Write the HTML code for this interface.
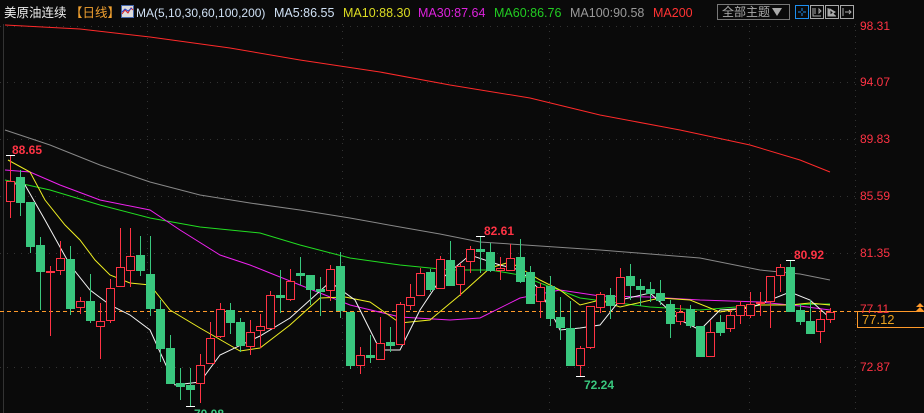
<!DOCTYPE html>
<html><head><meta charset="utf-8"><style>
html,body{margin:0;padding:0;background:#0a0a0a;width:924px;height:413px;overflow:hidden;font-family:"Liberation Sans","Noto Sans CJK SC",sans-serif}
.t{position:absolute;top:5px;font-size:12.5px;line-height:16px;white-space:nowrap}
.p{position:absolute;font-size:12px;color:#ff3344;left:860px}
</style></head><body>
<svg width="924" height="413" style="position:absolute;left:0;top:0">
<rect width="924" height="413" fill="#0a0a0a"/>
<line x1="855.5" y1="24" x2="855.5" y2="413" stroke="#333" stroke-dasharray="1,5"/>
<g stroke="#333" stroke-dasharray="1,6">
<line x1="0" y1="26.5" x2="855" y2="26.5"/><line x1="0" y1="82.5" x2="855" y2="82.5"/><line x1="0" y1="139.5" x2="855" y2="139.5"/><line x1="0" y1="196.5" x2="855" y2="196.5"/><line x1="0" y1="253.5" x2="855" y2="253.5"/><line x1="0" y1="367.5" x2="855" y2="367.5"/>
<line x1="147.5" y1="24" x2="147.5" y2="413"/><line x1="342.5" y1="24" x2="342.5" y2="413"/><line x1="549.5" y1="24" x2="549.5" y2="413"/><line x1="749.5" y1="24" x2="749.5" y2="413"/>
</g>
<line x1="3.5" y1="24" x2="3.5" y2="413" stroke="#333"/>
<line x1="0" y1="311.5" x2="858" y2="311.5" stroke="#ff9a2a" stroke-dasharray="4,3"/>
<g fill="none" stroke-width="1">
<polyline stroke="#ff2a2a" points="5,25 80,29 150,37 230,48 300,60 380,72 450,85 530,98 600,115 680,130 750,145 800,160 830,172"/>
<polyline stroke="#888" points="5,130 50,145 100,165 150,182 200,195 250,203 300,210 350,218 400,227 440,234 480,242 540,246 600,250 650,254 700,258 760,270 800,274 830,280"/>
<polyline stroke="#22dd22" points="5,180 50,190 100,205 150,218 200,227 260,233 300,245 350,258 400,265 450,270 490,270 520,275 540,283 580,298 650,307 700,310 760,305 830,304"/>
<polyline stroke="#ee22ee" points="5,170 30,172 60,185 100,200 150,210 180,230 220,255 250,265 300,285 350,305 400,317 450,320 480,318 520,298 560,290 600,296 650,297 700,300 760,302 800,306 830,310"/>
<polyline stroke="#eeee22" points="8,160 30,172 45,200 65,225 80,240 95,260 110,275 130,283 150,285 170,310 200,328 240,351 260,348 290,325 320,298 345,297 370,302 400,323 430,320 460,295 490,268 510,262 540,280 560,290 580,305 600,300 620,307 660,298 690,300 720,312 760,305 790,305 810,303 830,305"/>
<polyline stroke="#f4f4f4" points="8,183 25,185 45,220 70,265 90,290 110,305 130,315 150,330 175,385 200,382 220,355 260,336 290,318 330,282 355,300 380,350 400,350 420,310 440,280 470,255 500,265 520,270 540,290 560,330 580,328 600,325 620,300 650,293 680,320 700,330 720,310 750,308 790,292 810,300 830,318"/>
</g>
<g stroke="#ff3344" fill="#0a0a0a">
<line x1="10.5" y1="155" x2="10.5" y2="218"/><rect x="6.5" y="181.5" width="8" height="20"/>
<line x1="50.5" y1="266" x2="50.5" y2="336"/><rect x="46.5" y="271.5" width="8" height="1"/>
<line x1="60.5" y1="241" x2="60.5" y2="275"/><rect x="56.5" y="258.5" width="8" height="12"/>
<line x1="80.5" y1="297" x2="80.5" y2="314"/><rect x="76.5" y="301.5" width="8" height="6"/>
<line x1="100.5" y1="303" x2="100.5" y2="359"/><rect x="96.5" y="321.5" width="8" height="5"/>
<line x1="110.5" y1="279" x2="110.5" y2="323"/><rect x="106.5" y="288.5" width="8" height="32"/>
<line x1="120.5" y1="228" x2="120.5" y2="286"/><rect x="116.5" y="267.5" width="8" height="19"/>
<line x1="130.5" y1="228" x2="130.5" y2="287"/><rect x="126.5" y="256.5" width="8" height="14"/>
<line x1="200.5" y1="354" x2="200.5" y2="403"/><rect x="196.5" y="365.5" width="8" height="18"/>
<line x1="210.5" y1="322" x2="210.5" y2="363"/><rect x="206.5" y="338.5" width="8" height="25"/>
<line x1="220.5" y1="303" x2="220.5" y2="338"/><rect x="216.5" y="309.5" width="8" height="27"/>
<line x1="250.5" y1="320" x2="250.5" y2="355"/><rect x="246.5" y="332.5" width="8" height="14"/>
<line x1="260.5" y1="314" x2="260.5" y2="348"/><rect x="256.5" y="326.5" width="8" height="4"/>
<line x1="270.5" y1="291" x2="270.5" y2="329"/><rect x="266.5" y="295.5" width="8" height="33"/>
<line x1="290.5" y1="269" x2="290.5" y2="301"/><rect x="286.5" y="281.5" width="8" height="18"/>
<line x1="330.5" y1="265" x2="330.5" y2="301"/><rect x="326.5" y="269.5" width="8" height="21"/>
<line x1="360.5" y1="347" x2="360.5" y2="374"/><rect x="356.5" y="355.5" width="8" height="10"/>
<line x1="380.5" y1="317" x2="380.5" y2="359"/><rect x="376.5" y="343.5" width="8" height="16"/>
<line x1="400.5" y1="302" x2="400.5" y2="344"/><rect x="396.5" y="304.5" width="8" height="40"/>
<line x1="410.5" y1="284" x2="410.5" y2="310"/><rect x="406.5" y="297.5" width="8" height="8"/>
<line x1="420.5" y1="268" x2="420.5" y2="296"/><rect x="416.5" y="273.5" width="8" height="22"/>
<line x1="440.5" y1="256" x2="440.5" y2="289"/><rect x="436.5" y="259.5" width="8" height="29"/>
<line x1="460.5" y1="263" x2="460.5" y2="296"/><rect x="456.5" y="266.5" width="8" height="18"/>
<line x1="470.5" y1="246" x2="470.5" y2="273"/><rect x="466.5" y="249.5" width="8" height="12"/>
<line x1="500.5" y1="257" x2="500.5" y2="280"/><rect x="496.5" y="268.5" width="8" height="2"/>
<line x1="510.5" y1="244" x2="510.5" y2="270"/><rect x="506.5" y="258.5" width="8" height="12"/>
<line x1="540.5" y1="283" x2="540.5" y2="318"/><rect x="536.5" y="287.5" width="8" height="14"/>
<line x1="580.5" y1="346" x2="580.5" y2="376"/><rect x="576.5" y="348.5" width="8" height="17"/>
<line x1="590.5" y1="306" x2="590.5" y2="349"/><rect x="586.5" y="306.5" width="8" height="41"/>
<line x1="600.5" y1="292" x2="600.5" y2="313"/><rect x="596.5" y="294.5" width="8" height="13"/>
<line x1="620.5" y1="268" x2="620.5" y2="304"/><rect x="616.5" y="277.5" width="8" height="26"/>
<line x1="680.5" y1="305" x2="680.5" y2="325"/><rect x="676.5" y="312.5" width="8" height="9"/>
<line x1="710.5" y1="320" x2="710.5" y2="356"/><rect x="706.5" y="332.5" width="8" height="24"/>
<line x1="730.5" y1="310" x2="730.5" y2="332"/><rect x="726.5" y="315.5" width="8" height="13"/>
<line x1="740.5" y1="301" x2="740.5" y2="324"/><rect x="736.5" y="305.5" width="8" height="10"/>
<line x1="750.5" y1="292" x2="750.5" y2="318"/><rect x="746.5" y="304.5" width="8" height="11"/>
<line x1="760.5" y1="292" x2="760.5" y2="316"/><rect x="756.5" y="302.5" width="8" height="1"/>
<line x1="770.5" y1="276" x2="770.5" y2="328"/><rect x="766.5" y="276.5" width="8" height="25"/>
<line x1="780.5" y1="264" x2="780.5" y2="292"/><rect x="776.5" y="267.5" width="8" height="8"/>
<line x1="820.5" y1="309" x2="820.5" y2="343"/><rect x="816.5" y="319.5" width="8" height="12"/>
<line x1="830.5" y1="308" x2="830.5" y2="323"/><rect x="826.5" y="312.5" width="8" height="7"/>
</g>
<g stroke="#39c77e" fill="#39c77e">
<line x1="20.5" y1="170" x2="20.5" y2="216"/><rect x="16.5" y="177.5" width="8" height="25"/>
<line x1="30.5" y1="202" x2="30.5" y2="253"/><rect x="26.5" y="202.5" width="8" height="44"/>
<line x1="40.5" y1="237" x2="40.5" y2="310"/><rect x="36.5" y="245.5" width="8" height="26"/>
<line x1="70.5" y1="246" x2="70.5" y2="315"/><rect x="66.5" y="259.5" width="8" height="49"/>
<line x1="90.5" y1="274" x2="90.5" y2="323"/><rect x="86.5" y="301.5" width="8" height="19"/>
<line x1="140.5" y1="236" x2="140.5" y2="276"/><rect x="136.5" y="255.5" width="8" height="15"/>
<line x1="150.5" y1="236" x2="150.5" y2="316"/><rect x="146.5" y="274.5" width="8" height="34"/>
<line x1="160.5" y1="300" x2="160.5" y2="362"/><rect x="156.5" y="309.5" width="8" height="39"/>
<line x1="170.5" y1="335" x2="170.5" y2="383"/><rect x="166.5" y="348.5" width="8" height="35"/>
<line x1="180.5" y1="368" x2="180.5" y2="400"/><rect x="176.5" y="383.5" width="8" height="3"/>
<line x1="190.5" y1="368" x2="190.5" y2="406"/><rect x="186.5" y="385.5" width="8" height="4"/>
<line x1="230.5" y1="303" x2="230.5" y2="334"/><rect x="226.5" y="310.5" width="8" height="12"/>
<line x1="240.5" y1="318" x2="240.5" y2="352"/><rect x="236.5" y="322.5" width="8" height="23"/>
<line x1="280.5" y1="270" x2="280.5" y2="313"/><rect x="276.5" y="295.5" width="8" height="2"/>
<line x1="300.5" y1="257" x2="300.5" y2="285"/><rect x="296.5" y="273.5" width="8" height="2"/>
<line x1="310.5" y1="275" x2="310.5" y2="305"/><rect x="306.5" y="275.5" width="8" height="14"/>
<line x1="320.5" y1="277" x2="320.5" y2="316"/><rect x="316.5" y="289.5" width="8" height="2"/>
<line x1="340.5" y1="252" x2="340.5" y2="318"/><rect x="336.5" y="266.5" width="8" height="44"/>
<line x1="350.5" y1="312" x2="350.5" y2="369"/><rect x="346.5" y="312.5" width="8" height="53"/>
<line x1="370.5" y1="335" x2="370.5" y2="363"/><rect x="366.5" y="355.5" width="8" height="2"/>
<line x1="390.5" y1="327" x2="390.5" y2="352"/><rect x="386.5" y="342.5" width="8" height="3"/>
<line x1="430.5" y1="269" x2="430.5" y2="292"/><rect x="426.5" y="272.5" width="8" height="17"/>
<line x1="450.5" y1="241" x2="450.5" y2="286"/><rect x="446.5" y="260.5" width="8" height="25"/>
<line x1="480.5" y1="236" x2="480.5" y2="273"/><rect x="476.5" y="249.5" width="8" height="2"/>
<line x1="490.5" y1="243" x2="490.5" y2="272"/><rect x="486.5" y="252.5" width="8" height="18"/>
<line x1="520.5" y1="239" x2="520.5" y2="283"/><rect x="516.5" y="257.5" width="8" height="24"/>
<line x1="530.5" y1="266" x2="530.5" y2="304"/><rect x="526.5" y="272.5" width="8" height="31"/>
<line x1="550.5" y1="276" x2="550.5" y2="326"/><rect x="546.5" y="286.5" width="8" height="32"/>
<line x1="560.5" y1="297" x2="560.5" y2="340"/><rect x="556.5" y="317.5" width="8" height="10"/>
<line x1="570.5" y1="301" x2="570.5" y2="365"/><rect x="566.5" y="328.5" width="8" height="37"/>
<line x1="610.5" y1="288" x2="610.5" y2="319"/><rect x="606.5" y="295.5" width="8" height="10"/>
<line x1="630.5" y1="264" x2="630.5" y2="300"/><rect x="626.5" y="276.5" width="8" height="9"/>
<line x1="640.5" y1="279" x2="640.5" y2="306"/><rect x="636.5" y="286.5" width="8" height="3"/>
<line x1="650.5" y1="282" x2="650.5" y2="302"/><rect x="646.5" y="289.5" width="8" height="4"/>
<line x1="660.5" y1="280" x2="660.5" y2="305"/><rect x="656.5" y="293.5" width="8" height="7"/>
<line x1="670.5" y1="300" x2="670.5" y2="338"/><rect x="666.5" y="304.5" width="8" height="19"/>
<line x1="690.5" y1="305" x2="690.5" y2="328"/><rect x="686.5" y="309.5" width="8" height="16"/>
<line x1="700.5" y1="326" x2="700.5" y2="356"/><rect x="696.5" y="326.5" width="8" height="30"/>
<line x1="720.5" y1="315" x2="720.5" y2="336"/><rect x="716.5" y="322.5" width="8" height="10"/>
<line x1="790.5" y1="261" x2="790.5" y2="311"/><rect x="786.5" y="267.5" width="8" height="44"/>
<line x1="800.5" y1="304" x2="800.5" y2="325"/><rect x="796.5" y="310.5" width="8" height="11"/>
<line x1="810.5" y1="300" x2="810.5" y2="334"/><rect x="806.5" y="321.5" width="8" height="12"/>
</g>
<g stroke="#fff"><line x1="6" y1="155.5" x2="15" y2="155.5"/><line x1="476" y1="236.5" x2="485" y2="236.5"/><line x1="786" y1="260.5" x2="795" y2="260.5"/><line x1="576" y1="376.5" x2="585" y2="376.5"/><line x1="186" y1="406.5" x2="195" y2="406.5"/></g>
<text x="12" y="154" fill="#ff3344" font-size="12" font-weight="bold" font-family="Liberation Sans">88.65</text>
<text x="484" y="235" fill="#ff3344" font-size="12" font-weight="bold" font-family="Liberation Sans">82.61</text>
<text x="794" y="259" fill="#ff3344" font-size="12" font-weight="bold" font-family="Liberation Sans">80.92</text>
<text x="584" y="389" fill="#39c77e" font-size="12" font-weight="bold" font-family="Liberation Sans">72.24</text>
<text x="194" y="418" fill="#39c77e" font-size="12" font-weight="bold" font-family="Liberation Sans">70.08</text>
<rect x="857.5" y="311.5" width="70" height="16" fill="#0a0a0a" stroke="#ff9a2a"/>
<text x="862" y="324" fill="#e8a020" font-size="13" font-family="Liberation Sans">77.12</text>
<path d="M916 307 l4 -4 l4 4z M916 311 l4 -4 l4 4z" fill="#ff9a2a"/>
<rect x="717.5" y="4.5" width="72" height="15" fill="none" stroke="#777"/>
<text x="722" y="16" fill="#aaa" font-size="12" font-family="Liberation Sans,Noto Sans CJK SC,sans-serif">全部主题</text>
<path d="M772 8 h10 l-5 8z" fill="#aaa"/>
<rect x="795.5" y="5.5" width="13" height="13" fill="none" stroke="#1e8ff0"/>
<path d="M802 8 v3 M802 13 v3 M798 12 h3 M803 12 h3" stroke="#1e8ff0"/>
<rect x="810.5" y="5.5" width="13" height="13" fill="none" stroke="#aaa"/>
<path d="M813 8 v8 h8 M815 8 v6 M819 9 v4 l2 -2z" stroke="#aaa" fill="none"/>
<rect x="825.5" y="5.5" width="13" height="13" fill="none" stroke="#aaa"/>
<path d="M828 8 v8 h8 M830 9 l5 3 -5 3z" stroke="#aaa" fill="#aaa"/>
<rect x="840.5" y="5.5" width="13" height="13" fill="none" stroke="#aaa"/>
<path d="M843 8 v8 M845 12 h6 M849 10 l2 2 -2 2" stroke="#aaa" fill="none"/>
<rect x="121.5" y="5.5" width="12" height="12" fill="#ddd" stroke="#4466aa"/>
<path d="M122 14 l3 -4 3 3 3 -5 2 2" stroke="#dd2222" fill="none"/>
<path d="M122 12 l3 -3 3 2 4 -3" stroke="#2244cc" fill="none"/>
</svg>
<div class="t" style="left:4px;color:#eee">美原油连续</div>
<div class="t" style="left:70px;color:#f0a030">【日线】</div>
<div class="t" style="left:136px;color:#cfe0f4;font-size:12px">MA(5,10,30,60,100,200)</div>
<div class="t" style="left:274px;color:#cfe0f4">MA5:86.55</div>
<div class="t" style="left:343px;color:#dddd22">MA10:88.30</div>
<div class="t" style="left:418px;color:#dd22dd">MA30:87.64</div>
<div class="t" style="left:494px;color:#22cc22">MA60:86.76</div>
<div class="t" style="left:570px;color:#999">MA100:90.58</div>
<div class="t" style="left:653px;color:#ff3333">MA200</div>
<div class="p" style="top:19px">98.31</div>
<div class="p" style="top:75px">94.07</div>
<div class="p" style="top:132px">89.83</div>
<div class="p" style="top:189px">85.59</div>
<div class="p" style="top:246px">81.35</div>
<div class="p" style="top:302px">77.11</div>
<div class="p" style="top:360px">72.87</div>
</body></html>
